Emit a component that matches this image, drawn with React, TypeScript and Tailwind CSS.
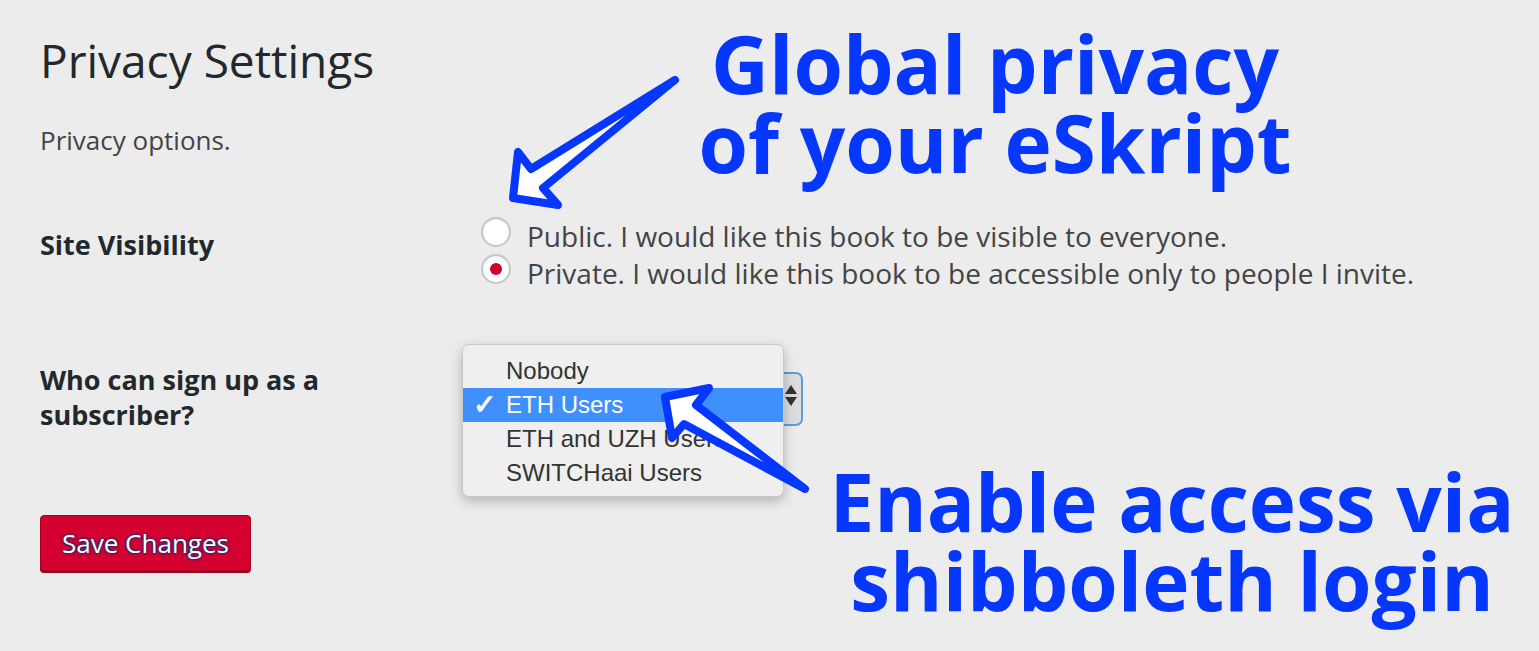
import React from 'react';

const options = ['Nobody', 'ETH Users', 'ETH and UZH Users', 'SWITCHaai Users'];

function Radio({ checked }: { checked?: boolean }) {
  return (
    <span className="mt-[-1px] flex h-[30px] w-[30px] shrink-0 items-center justify-center rounded-full border-2 border-[#c3c6c9] bg-white shadow-[inset_0_1px_2px_rgba(0,0,0,0.08)]">
      {checked && <span className="h-[12px] w-[12px] rounded-full bg-[#d2002b]" />}
    </span>
  );
}

function Annotations() {
  return (
    <div className="pointer-events-none absolute inset-0">
      <svg className="absolute left-0 top-0" width="1539" height="651" viewBox="0 0 1539 651">
        <polygon
          points="675,80 531,169 518,152 513,198 558,205 543,188"
          fill="#ffffff"
          stroke="#0637ff"
          strokeWidth="8"
          strokeLinejoin="round"
        />
        <polygon
          points="805,489 684,424 672,438 665,397 709,388 696,405"
          fill="#ffffff"
          stroke="#0637ff"
          strokeWidth="8"
          strokeLinejoin="round"
        />
      </svg>
      <div className="absolute left-[660px] top-[23px] w-[670px] text-center font-['Open_Sans',sans-serif] text-[80px] font-bold leading-[79px] text-[#0637ff]">
        <div>Global privacy</div>
        <div>of your eSkript</div>
      </div>
      <div className="absolute left-[800px] top-[461px] w-[744px] text-center font-['Open_Sans',sans-serif] text-[80px] font-bold leading-[79px] text-[#0637ff]">
        <div>Enable access via</div>
        <div>shibboleth login</div>
      </div>
    </div>
  );
}

export default function App() {
  return (
    <div className="relative h-[651px] w-[1539px] overflow-hidden bg-[#ececec] font-['Open_Sans',sans-serif] text-[#23282d]">
      <div className="flex flex-col px-[40px] pt-[28px]">
        <h1 className="text-[46px] font-normal leading-[64px]">Privacy Settings</h1>
        <p className="mt-[33px] text-[26px] leading-[30px] text-[#444]">Privacy options.</p>

        <div className="mt-[61px] grid grid-cols-[422px_1fr]">
          <div className="pt-[13px] text-[27px] font-bold leading-[32px]">Site Visibility</div>
          <div className="flex flex-col pl-[19px] pt-[2px] text-[28px] leading-[37px] text-[#444]">
            <label className="flex items-start gap-[16px]">
              <Radio />
              <span>Public. I would like this book to be visible to everyone.</span>
            </label>
            <label className="flex items-start gap-[16px]">
              <Radio checked />
              <span>Private. I would like this book to be accessible only to people I invite.</span>
            </label>
          </div>

          <div className="mt-[70px] w-[310px] text-[27px] font-bold leading-[35px]">
            Who can sign up as a subscriber?
          </div>
          <div className="relative mt-[80px] h-[54px] w-[341px]">
            <div className="h-full w-full rounded-[7px] border-2 border-[#5b9dd9] bg-gradient-to-r from-[#f4f4f4] to-[#dcdcdc]">
              <div className="absolute right-[6px] top-[13px] flex flex-col gap-[3px]">
                <span className="h-0 w-0 border-x-[6px] border-b-[9px] border-x-transparent border-b-[#333]" />
                <span className="h-0 w-0 border-x-[6px] border-t-[9px] border-x-transparent border-t-[#333]" />
              </div>
            </div>
            <ul className="absolute left-0 top-[-28px] w-[322px] rounded-[7px] border border-[#c9c9c9] bg-[#efefef] pb-[6px] pt-[9px] font-['Liberation_Sans',sans-serif] text-[24px] leading-[34px] text-[#333] shadow-[0_4px_12px_rgba(0,0,0,0.25)]">
              {options.map((o) => (
                <li
                  key={o}
                  className={`flex items-center pl-[43px] ${o === 'ETH Users' ? 'relative bg-[#3f8ffc] text-white' : ''}`}
                >
                  {o === 'ETH Users' && (
                    <span className="absolute left-[10px] text-[28px] font-bold">✓</span>
                  )}
                  {o}
                </li>
              ))}
            </ul>
          </div>
        </div>

        <div className="mt-[83px]">
          <button className="h-[56px] w-[211px] rounded-[4px] border border-[#a8001f] bg-[#d4002f] text-[26px] leading-[50px] text-white shadow-[0_2px_0_#9b001d] [text-shadow:0_0_3px_#0b2f7a,0_0_3px_#0b2f7a,0_0_1px_#0b2f7a]">
            Save Changes
          </button>
        </div>
      </div>

      <Annotations />
    </div>
  );
}
